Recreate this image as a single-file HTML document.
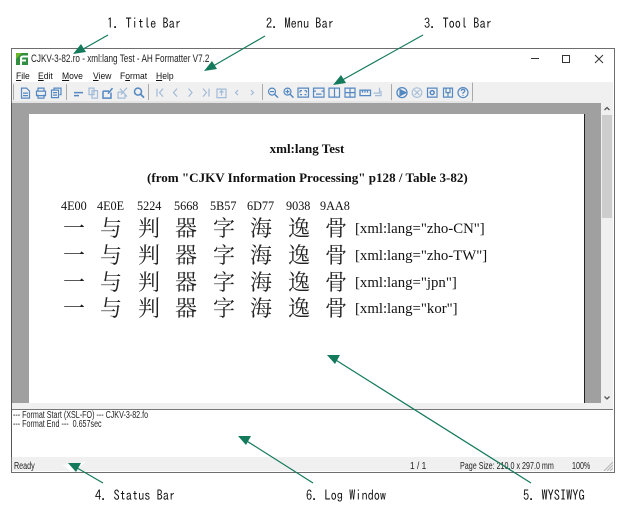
<!DOCTYPE html>
<html lang="en"><head><meta charset="utf-8"><title>AH Formatter</title>
<style>
html,body{margin:0;padding:0;background:#fff}
body{position:relative;width:630px;height:528px;overflow:hidden;font-family:"Liberation Sans",sans-serif;color:#000}
#w{position:absolute;left:0;top:0;width:630px;height:528px;overflow:hidden;filter:blur(.3px);background:#fff}
.a{position:absolute;white-space:nowrap}
.lb{font-family:"IPAGothic","Liberation Mono",monospace;font-size:14px;color:#111;line-height:16px;transform:scaleX(.88);transform-origin:0 0}
.ui{font-size:9.500px;line-height:11px;color:#111;transform:scaleX(.9);transform-origin:0 0}
.n{transform-origin:0 0;transform:scaleX(.73);font-size:9.800px;color:#222;line-height:11px}
.m u{text-decoration:underline}
.s{font-family:"Liberation Serif",serif}
.hx{font-size:12.200px;line-height:14px;color:#111;top:199px}
.r{font-family:"Noto Serif CJK SC","Noto Serif CJK JP",serif;font-size:22px;line-height:26px;width:30px;text-align:center;color:#222}
.x{font-size:14.800px;line-height:18px;left:355px;color:#111}
</style></head><body><div id="w">
<div class="a" style="left:11px;top:48px;width:602px;height:423px;border:1px solid #6e6e6e;background:#fff"></div>
<div class="a" style="left:12px;top:82px;width:601px;height:21px;background:#f0f0f0"></div>
<div class="a" style="left:12px;top:101px;width:461px;height:2px;background:#e4e4e4"></div>
<div class="a" style="left:12px;top:103px;width:589px;height:300px;background:#a0a0a0"></div>
<div class="a" style="left:11px;top:103px;width:1px;height:354px;background:#555"></div>
<div class="a" style="left:29px;top:114px;width:555px;height:289px;background:#fff;border-right:1px solid #222"></div>
<div class="a" style="left:601px;top:103px;width:12px;height:300px;background:#f0f0f0"></div>
<div class="a" style="left:602px;top:115px;width:10px;height:103px;background:#cdcdcd"></div>
<div class="a" style="left:12px;top:403px;width:601px;height:6px;background:#f0f0f0"></div>
<div class="a" style="left:12px;top:409px;width:601px;height:1px;background:#777"></div>
<div class="a" style="left:12px;top:457px;width:601px;height:14px;background:#f0f0f0"></div>

<svg class="a" style="left:16px;top:53px" width="12" height="12" viewBox="0 0 12 12"><rect width="12" height="12" fill="#2f8f3f"/><path d="M0 0h6L0 6z" fill="#6fb52c"/><path d="M5 12V5.500Q5 3.500 7 3.500H12M5 7.500H10" stroke="#fff" stroke-width="2" fill="none"/></svg>
<div class="a" style="left:31px;top:53px;font-size:10.600px;line-height:12px;color:#222;transform:scaleX(.77);transform-origin:0 0">CJKV-3-82.ro - xml:lang Test - AH Formatter V7.2</div>
<svg class="a" style="left:525px;top:50px" width="85" height="18" fill="none" stroke="#333"><path d="M6 8.500H14"/><rect x="37.500" y="5.500" width="7" height="7"/><path d="M70 5l8 8M78 5l-8 8"/></svg>

<div class="a ui m" style="left:16px;top:71px"><u>F</u>ile</div>
<div class="a ui m" style="left:38px;top:71px"><u>E</u>dit</div>
<div class="a ui m" style="left:62px;top:71px"><u>M</u>ove</div>
<div class="a ui m" style="left:93px;top:71px"><u>V</u>iew</div>
<div class="a ui m" style="left:120px;top:71px">F<u>o</u>rmat</div>
<div class="a ui m" style="left:156px;top:71px"><u>H</u>elp</div>

<svg class="a" style="left:0;top:82px" width="480" height="21" fill="none" stroke="#5488c2" stroke-width="1.200">
<g transform="translate(0,.6)">
<g stroke="#a9a9a9" stroke-width="1"><path d="M13.500 1.500V17.500M66.500 1.500V17.500M148.500 1.500V17.500M262.500 1.500V17.500M391.500 1.500V17.500M472.500 0V18.500"/></g>
<path d="M21.500 5.500H26.500L29.500 8.500V15.500H21.500ZM23 10.500H28M23 13H28"/>
<path d="M38 8V5.500H44V8M36.500 8.500H45.500V13H36.500ZM38 12V15.500H44V12"/>
<path d="M54 7V5.500H61V12H59.500M51.500 7.500H58.500V15H51.500ZM53 10H57M53 12.500H57"/>
<path d="M74 10H83M74 13H79" stroke-width="1.500"/>
<g opacity=".5"><path d="M89 5.500H94V12H89ZM92 8H97.500V15.500H92Z"/></g>
<path d="M103 8.500H109M103 8.500V15.500H111V10M108 11L112.500 5.500" stroke-width="1.500"/>
<g opacity=".5"><path d="M118 9.500H123M118 9.500V15.500H125V11M121 12L127 5M120 6L127 14"/></g>
<circle cx="138" cy="9" r="3.500" stroke-width="1.500"/><path d="M140.500 11.500L144 15" stroke-width="1.800"/>
<g opacity=".5">
<path d="M157 6V14M163 6L159.500 10L163 14"/><path d="M177 6L173.500 10L177 14"/><path d="M188.500 6L192 10L188.500 14"/>
<path d="M203 6L206.500 10L203 14M209 6V14"/>
<path d="M217 6.500H226V15H217ZM219.500 10L221.500 8L223.500 10M221.500 8V13"/>
<path d="M238 7.500L235.500 10L238 12.500"/><path d="M251 7.500L253.500 10L251 12.500"/></g>
<circle cx="272" cy="9" r="3.500"/><path d="M274.500 11.500L278 15" stroke-width="1.500"/><path d="M270 9H274"/>
<circle cx="287.500" cy="9" r="3.500"/><path d="M290 11.500L293.500 15" stroke-width="1.500"/><path d="M285.500 9H289.500M287.500 7V11"/>
<path d="M298 5.500H308.500V14.500H298ZM300 8H302M300 8V10M306.500 8H304.500M306.500 8V10M300 12H302M306.500 12H304.500" />
<path d="M313.500 5.500H324V14.500H313.500ZM313.500 8.500H316M321.500 8.500H324M316 11.500H321.500"/>
<path d="M329 5.500H339.500V14.500H329ZM334.500 5.500V14.500"/>
<path d="M345 5.500H355V14.500H345ZM350 5.500V14.500M345 10H355"/>
<path d="M360 7.500H370.500V13H360ZM362.500 7.500V10M365 7.500V10M367.500 7.500V10" stroke-width="1.300"/>
<g opacity=".5"><path d="M379.500 5V10.500H373.500M375 13H381V8"/></g>
<circle cx="402" cy="10" r="5" stroke-width="1.300"/><path d="M400 7L406 10L400 13Z" fill="#5488c2"/>
<g opacity=".45"><circle cx="417" cy="10" r="4.800"/><path d="M414.500 7.500L419.500 12.500M419.500 7.500L414.500 12.500"/></g>
<path d="M427.500 5.500H437V14.500H427.500Z"/><circle cx="432.200" cy="10" r="2" stroke-width="1.500"/>
<path d="M443.500 5.500H452.500V14.500H443.500ZM446 5.500V10H450V5.500M448 10V14.500"/>
<circle cx="463" cy="10" r="5" stroke-width="1.200"/><path d="M461.300 8.500Q461.500 6.800 463 6.800Q464.800 6.800 464.800 8.300Q464.800 9.300 463 10.200V11.200M463 12.300V13.300"/>
</g></svg>

<svg class="a" style="left:601px;top:103px" width="12" height="300" fill="none" stroke="#555" stroke-width="1.300"><path d="M3.500 7L6 4.500L8.500 7"/><path d="M3.500 293.500L6 296L8.500 293.500"/></svg>

<div class="a s" style="left:0;top:141px;width:614px;text-align:center;font-size:13px;line-height:16px;font-weight:bold;color:#111">xml:lang Test</div>
<div class="a s" style="left:147px;top:170px;font-size:13.050px;line-height:16px;font-weight:bold;color:#111">(from "CJKV Information Processing" p128 / Table 3-82)</div>

<div class="a s hx" style="left:61px">4E00</div><div class="a s hx" style="left:97px">4E0E</div><div class="a s hx" style="left:137px">5224</div><div class="a s hx" style="left:174px">5668</div><div class="a s hx" style="left:210px">5B57</div><div class="a s hx" style="left:247px">6D77</div><div class="a s hx" style="left:286px">9038</div><div class="a s hx" style="left:320px">9AA8</div>

<div lang="zh-CN"><span class="a r" style="left:59px;top:215px">一</span><span class="a r" style="left:96px;top:215px">与</span><span class="a r" style="left:134px;top:215px">判</span><span class="a r" style="left:171px;top:215px">器</span><span class="a r" style="left:209px;top:215px">字</span><span class="a r" style="left:246px;top:215px">海</span><span class="a r" style="left:284px;top:215px">逸</span><span class="a r" style="left:321px;top:215px">骨</span></div>
<div lang="zh-TW"><span class="a r" style="left:59px;top:242px">一</span><span class="a r" style="left:96px;top:242px">与</span><span class="a r" style="left:134px;top:242px">判</span><span class="a r" style="left:171px;top:242px">器</span><span class="a r" style="left:209px;top:242px">字</span><span class="a r" style="left:246px;top:242px">海</span><span class="a r" style="left:284px;top:242px">逸</span><span class="a r" style="left:321px;top:242px">骨</span></div>
<div lang="ja"><span class="a r" style="left:59px;top:269px">一</span><span class="a r" style="left:96px;top:269px">与</span><span class="a r" style="left:134px;top:269px">判</span><span class="a r" style="left:171px;top:269px">器</span><span class="a r" style="left:209px;top:269px">字</span><span class="a r" style="left:246px;top:269px">海</span><span class="a r" style="left:284px;top:269px">逸</span><span class="a r" style="left:321px;top:269px">骨</span></div>
<div lang="ko"><span class="a r" style="left:59px;top:295px">一</span><span class="a r" style="left:96px;top:295px">与</span><span class="a r" style="left:134px;top:295px">判</span><span class="a r" style="left:171px;top:295px">器</span><span class="a r" style="left:209px;top:295px">字</span><span class="a r" style="left:246px;top:295px">海</span><span class="a r" style="left:284px;top:295px">逸</span><span class="a r" style="left:321px;top:295px">骨</span></div>

<div class="a s x" style="top:220px">[xml:lang="zho-CN"]</div>
<div class="a s x" style="top:247px">[xml:lang="zho-TW"]</div>
<div class="a s x" style="top:274px">[xml:lang="jpn"]</div>
<div class="a s x" style="top:300px">[xml:lang="kor"]</div>

<div class="a n" style="left:13px;top:410px">--- Format Start (XSL-FO) --- CJKV-3-82.fo</div>
<div class="a n" style="left:13px;top:419px">--- Format End ---&nbsp; 0.657sec</div>

<div class="a n" style="left:14px;top:461px">Ready</div>
<div class="a n" style="left:410px;top:461px;transform:scaleX(.85)">1 / 1</div>
<div class="a n" style="left:460px;top:461px">Page Size: 210.0 x 297.0 mm</div>
<div class="a n" style="left:572px;top:461px">100%</div>
<svg class="a" style="left:603px;top:461px" width="10" height="10" stroke="#b5b5b5"><path d="M1 10L10 1M4 10L10 4M7 10L10 7"/></svg>

<div class="a lb" style="left:107px;top:15px">1. Title Bar</div>
<div class="a lb" style="left:266px;top:15px">2. Menu Bar</div>
<div class="a lb" style="left:424px;top:15px">3. Tool Bar</div>
<div class="a lb" style="left:95px;top:487px">4. Status Bar</div>
<div class="a lb" style="left:306px;top:487px">6. Log Window</div>
<div class="a lb" style="left:523px;top:487px">5. WYSIWYG</div>

<svg class="a" style="left:0;top:0" width="630" height="528">
<path d="M62 465L86 462L72 472Z" fill="#fff"/>
<g stroke="#147a5c" stroke-width="1.200" fill="none"><path d="M108 35L78 52M265 36L208 69M423 35L337 83M103 483L72 465M313 483L242 438M531 483L331 357"/></g>
<g fill="#147a5c"><path d="M73 54L81 44L86 52Z"/><path d="M204 71L212 61L217 69Z"/><path d="M333 85L341 75L346 83Z"/><path d="M68 463L81 463L76 472Z"/><path d="M238 436L251 436L246 445Z"/><path d="M327 355L340 355L335 364Z"/></g>
</svg>
</div></body></html>
